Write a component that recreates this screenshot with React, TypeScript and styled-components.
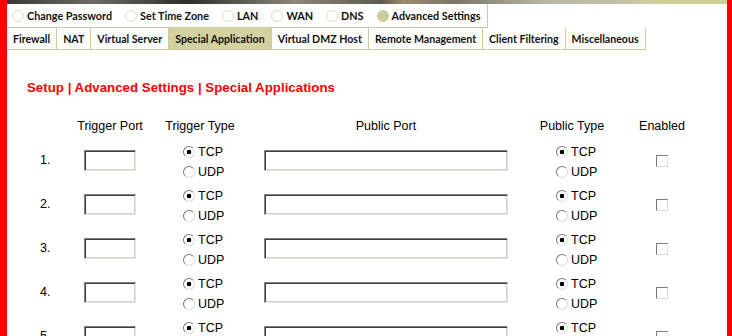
import styled, { createGlobalStyle } from "styled-components";

const GlobalStyle = createGlobalStyle`
    html, body {
        margin: 0;
        padding: 0;
        background: #fff;
    }
    body {
        font-family: "Liberation Sans", Arial, sans-serif;
        overflow: hidden;
    }
`

const BEIGE = '#cccc99'

const menuItems = ['Change Password', 'Set Time Zone', 'LAN', 'WAN', 'DNS', 'Advanced Settings']
const tabs = ['Firewall', 'NAT', 'Virtual Server', 'Special Application', 'Virtual DMZ Host', 'Remote Management', 'Client Filtering', 'Miscellaneous']
const rows = [1, 2, 3, 4, 5]

const App = () => {
    return(
        <>
            <GlobalStyle />
            <Page>
                <RedBar $w={7} />
                <Main>
                    <Banner />
                    <MenuLine>
                        <Menu>
                            {menuItems.map(item => (
                                <MenuItem key={item}>
                                    <MenuDot $on={item === 'Advanced Settings'} />
                                    {item}
                                </MenuItem>
                            ))}
                        </Menu>
                    </MenuLine>
                    <Tabs>
                        {tabs.map(tab => (
                            <Tab key={tab} $active={tab === 'Special Application'}>{tab}</Tab>
                        ))}
                    </Tabs>
                    <Title>Setup | Advanced Settings | Special Applications</Title>
                    <Grid>
                        <Head />
                        <Head>Trigger Port</Head>
                        <Head>Trigger Type</Head>
                        <Head>Public Port</Head>
                        <Head>Public Type</Head>
                        <Head>Enabled</Head>
                        {rows.map(n => (
                            <Row key={n}>
                                <Num>{n}.</Num>
                                <Cell><TextBox $w={52} /></Cell>
                                <RadioCell $pad={33}>
                                    <RadioLine><Radio $checked />TCP</RadioLine>
                                    <RadioLine><Radio />UDP</RadioLine>
                                </RadioCell>
                                <Cell><TextBox $w={244} /></Cell>
                                <RadioCell $pad={34}>
                                    <RadioLine><Radio $checked />TCP</RadioLine>
                                    <RadioLine><Radio />UDP</RadioLine>
                                </RadioCell>
                                <Cell><Check /></Cell>
                            </Row>
                        ))}
                    </Grid>
                </Main>
                <RedBar $w={5} />
            </Page>
        </>
    )
}
export default App

const Page = styled.div`
    display: flex;
    height: 336px;
`

const RedBar = styled.div<{ $w: number }>`
    flex: 0 0 ${p => p.$w}px;
    background: #ff0000;
`

const Main = styled.div`
    flex: 1;
    display: flex;
    flex-direction: column;
    align-items: flex-start;
    overflow: hidden;
`

const Banner = styled.div`
    align-self: stretch;
    flex: 0 0 4px;
    background: linear-gradient(90deg, #3a3a36 0%, #6c6a62 12%, #2e2e2a 25%, #8a8878 40%, #5e5a50 52%, #a08a6c 55%, #7a7466 62%, #b8b8a4 75%, #c0bea8 84%, #d2cf9c 90%, #cfcc96 100%);
`

const MenuLine = styled.div`
    align-self: stretch;
    display: flex;
`

const Menu = styled.div`
    display: flex;
    align-items: center;
    gap: 13px;
    height: 23px;
    padding: 0 7px 0 5px;
    border-right: 1px solid ${BEIGE};
    border-bottom: 1px solid ${BEIGE};
    font-family: Lato, "Open Sans", sans-serif;
    font-weight: 700;
    font-size: 10.8px;
    color: #111;
`

const MenuItem = styled.span`
    display: flex;
    align-items: center;
    gap: 3px;
`

const MenuDot = styled.span<{ $on?: boolean }>`
    width: 12px;
    height: 12px;
    box-sizing: border-box;
    border-radius: 50%;
    border: 1px solid ${p => p.$on ? BEIGE : '#dcdcc4'};
    background: ${p => p.$on ? BEIGE : '#fff'};
`

const Tabs = styled.div`
    display: flex;
    flex: 0 0 21px;
    border-bottom: 1px solid ${BEIGE};
    font-family: Lato, "Open Sans", sans-serif;
    font-weight: 700;
    font-size: 10.6px;
    color: #111;
`

const Tab = styled.div<{ $active?: boolean }>`
    display: flex;
    align-items: center;
    padding: 0 6px;
    border-right: 1px solid ${BEIGE};
    background: ${p => p.$active ? '#d3d0a2' : '#fff'};
`

const Title = styled.h1`
    margin: 30px 0 0 20px;
    font-size: 13.3px;
    line-height: 16px;
    font-weight: 700;
    color: #ff0000;
`

const Grid = styled.div`
    display: grid;
    grid-template-columns: 50px 80px 100px 272px 100px 80px;
    grid-template-rows: 24px;
    grid-auto-rows: 44px;
    margin: 18px 0 0 13px;
    font-size: 12.5px;
    color: #000;
`

const Head = styled.div`
    display: flex;
    align-items: center;
    justify-content: center;
`

const Row = styled.div`
    display: contents;
`

const Num = styled.div`
    display: flex;
    align-items: center;
    padding-left: 20px;
`

const Cell = styled.div`
    display: flex;
    align-items: center;
    justify-content: center;
`

const RadioCell = styled.div<{ $pad: number }>`
    display: flex;
    flex-direction: column;
    justify-content: center;
    padding: 4px 0 0 ${p => p.$pad}px;
`

const RadioLine = styled.label`
    display: flex;
    align-items: center;
    gap: 3px;
    height: 20px;
`

const Radio = styled.span<{ $checked?: boolean }>`
    width: 12px;
    height: 12px;
    box-sizing: border-box;
    border-radius: 50%;
    border: 1px solid;
    border-color: #7a7a7a #dcdcdc #dcdcdc #7a7a7a;
    background: ${p => p.$checked ? 'radial-gradient(circle, #000 0 2px, #fff 2.6px)' : '#fff'};
`

const TextBox = styled.div<{ $w: number }>`
    width: ${p => p.$w}px;
    height: 21px;
    box-sizing: border-box;
    border: 1px solid;
    border-color: #808080 #e4e4e4 #e4e4e4 #808080;
    box-shadow: inset 1px 1px 0 #404040, inset -1px -1px 0 #d4d0c8;
    background: #fff;
`

const Check = styled.span`
    width: 12px;
    height: 12px;
    box-sizing: border-box;
    border: 1px solid;
    border-color: #7a7a7a #dcdcdc #dcdcdc #7a7a7a;
    background: #fff;
    margin-top: 2px;
`
